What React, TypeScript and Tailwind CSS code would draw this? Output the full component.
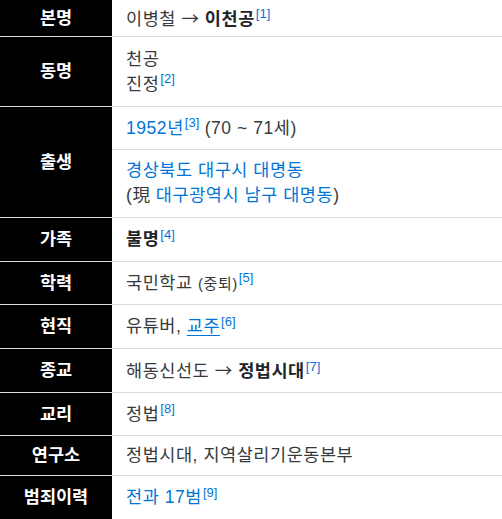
import React from 'react';

const Sup = ({ n }: { n: number }) => (
    <sup className="text-[13px] text-[#0275d8] ml-[1px] tracking-normal">[{n}]</sup>
);

const Link = ({ children, underline }: { children: React.ReactNode; underline?: boolean }) => (
    <span className={`text-[#0275d8] ${underline ? 'underline underline-offset-[3px]' : ''}`}>{children}</span>
);

const Arrow = () => (
    <span style={{ fontFamily: '"Noto Sans CJK KR", sans-serif' }}>→</span>
);

const Head = ({ label, className }: { label: string; className: string }) => (
    <div className={`w-[112px] shrink-0 bg-black text-white font-bold text-[17.5px] flex items-center justify-center ${className}`}>
        {label}
    </div>
);

const Cell = ({ children, className }: { children: React.ReactNode; className: string }) => (
    <div className={`flex-1 flex flex-col justify-center pl-[14px] leading-[25px] tracking-[0.55px] ${className}`}>
        {children}
    </div>
);

const Row = ({ label, h, children }: { label: string; h: string; children: React.ReactNode }) => (
    <div className="flex border-b border-[#dddddd]">
        <Head label={label} className={h} />
        <Cell className={h}>{children}</Cell>
    </div>
);

export default function App() {
    return (
        <div
            className="w-[502px] h-[519px] overflow-hidden bg-white text-[#373a3c] text-[17.5px]"
            style={{ fontFamily: '"Liberation Sans", "Noto Sans CJK KR", sans-serif' }}
        >
            <Row label="본명" h="h-[36px]">
                <div>이병철 <Arrow /> <b className="text-[#212529]">이천공</b><Sup n={1} /></div>
            </Row>
            <Row label="동명" h="h-[69px]">
                <div>천공</div>
                <div>진정<Sup n={2} /></div>
            </Row>

            {/* 출생: header spans two content blocks */}
            <div className="flex border-b border-[#dddddd]">
                <Head label="출생" className="h-[110px]" />
                <div className="flex-1 flex flex-col">
                    <Cell className="h-[43px] border-b border-[#dddddd] flex-none">
                        <div><Link>1952년</Link><Sup n={3} /> (70 ~ 71세)</div>
                    </Cell>
                    <Cell className="h-[66px] flex-none">
                        <div><Link>경상북도 대구시 대명동</Link></div>
                        <div>(現 <Link>대구광역시 남구 대명동</Link>)</div>
                    </Cell>
                </div>
            </div>

            <Row label="가족" h="h-[43px]">
                <div><b className="text-[#212529]">불명</b><Sup n={4} /></div>
            </Row>
            <Row label="학력" h="h-[42px]">
                <div>국민학교 <span className="text-[15px]">(중퇴)</span><Sup n={5} /></div>
            </Row>
            <Row label="현직" h="h-[43px]">
                <div>유튜버, <Link underline>교주</Link><Sup n={6} /></div>
            </Row>
            <Row label="종교" h="h-[43px]">
                <div>해동신선도 <Arrow /> <b className="text-[#212529]">정법시대</b><Sup n={7} /></div>
            </Row>
            <Row label="교리" h="h-[42px]">
                <div>정법<Sup n={8} /></div>
            </Row>
            <Row label="연구소" h="h-[39px]">
                <div>정법시대, 지역살리기운동본부</div>
            </Row>
            <div className="flex">
                <Head label="범죄이력" className="h-[43px]" />
                <Cell className="h-[43px]">
                    <div><Link>전과 17범</Link><Sup n={9} /></div>
                </Cell>
            </div>
        </div>
    );
}
